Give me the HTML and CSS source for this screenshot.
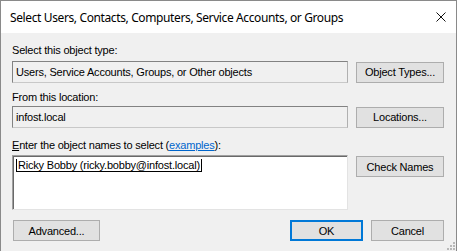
FILE: index.html
```html
<!DOCTYPE html>
<html>
<head>
<meta charset="utf-8">
<link rel="stylesheet" href="styles.css">
</head>
<body>
<div class="window">
  <div class="titlebar">
    <span class="title">Select Users, Contacts, Computers, Service Accounts, or Groups</span>
    <svg class="close" width="10" height="10" viewBox="0 0 10 10"><path d="M0.5 0.5 L9.5 9.5 M9.5 0.5 L0.5 9.5" stroke="#111" stroke-width="1" fill="none"/></svg>
  </div>
  <div class="content">
    <div class="label l1">Select this object type:</div>
    <div class="row">
      <div class="field">Users, Service Accounts, Groups, or Other objects</div>
      <div class="btn">Object Types...</div>
    </div>
    <div class="label l2">From this location:</div>
    <div class="row">
      <div class="field">infost.local</div>
      <div class="btn">Locations...</div>
    </div>
    <div class="label l3"><u>E</u>nter the object names to select (<a class="link">examples</a>):</div>
    <div class="row top">
      <div class="area"><span class="name">Ricky Bobby (ricky.bobby@infost.local)</span></div>
      <div class="btn">Check Names</div>
    </div>
    <div class="bottom">
      <div class="btn adv">Advanced...</div>
      <div class="spacer"></div>
      <div class="btn ok">OK</div>
      <div class="btn">Cancel</div>
    </div>
    <svg class="grip" width="10" height="10" viewBox="0 0 10 10">
      <g fill="#b8b8b8">
        <rect x="7" y="1" width="2" height="2"/>
        <rect x="4" y="4" width="2" height="2"/><rect x="7" y="4" width="2" height="2"/>
        <rect x="1" y="7" width="2" height="2"/><rect x="4" y="7" width="2" height="2"/><rect x="7" y="7" width="2" height="2"/>
      </g>
    </svg>
  </div>
</div>
</body>
</html>
```
FILE: styles.css
```css
html, body {
  margin: 0;
  padding: 0;
  background: #ffffff;
}
.window {
  width: 457px;
  height: 251px;
  box-sizing: border-box;
  border: 1px solid #8a8a8a;
  border-bottom: none;
  display: flex;
  flex-direction: column;
  overflow: hidden;
}
.titlebar {
  height: 32px;
  flex: none;
  background: #ffffff;
  display: flex;
  align-items: center;
  padding-left: 9px;
  padding-right: 10px;
  box-sizing: border-box;
}
.title {
  font-family: "Noto Sans", "Open Sans", sans-serif;
  font-size: 12px;
  color: #000;
  flex: 1;
  letter-spacing: -0.38px;
}
.close {
  display: block;
}
.content {
  flex: 1;
  background: #f0f0f0;
  padding: 0 12px 0 11px;
  position: relative;
  font-family: "Liberation Sans", Arial, sans-serif;
  font-size: 11px;
  letter-spacing: -0.2px;
  color: #000;
}
.label {
  line-height: 13px;
  height: 13px;
}
.l1 { margin-top: 11px; margin-bottom: 4px; }
.l2 { margin-top: 8px; margin-bottom: 2px; }
.l3 { margin-top: 11px; margin-bottom: 3px; }
.link {
  color: #0066cc;
  text-decoration: underline;
}
.row {
  display: flex;
  gap: 8px;
  align-items: center;
}
.row.top {
  align-items: flex-start;
}
.field {
  width: 336px;
  height: 22px;
  box-sizing: border-box;
  border: 1px solid #828282;
  border-right-color: #b0b0b0;
  border-bottom-color: #c8c8c8;
  background: #f0f0f0;
  padding-left: 3px;
  line-height: 20px;
}
.btn {
  width: 88px;
  height: 21px;
  box-sizing: border-box;
  border: 1px solid #adadad;
  background: #e1e1e1;
  display: flex;
  align-items: center;
  justify-content: center;
}
.area {
  width: 336px;
  height: 55px;
  box-sizing: border-box;
  background: #ffffff;
  border-top: 1px solid #a0a0a0;
  border-left: 1px solid #a0a0a0;
  border-right: 1px solid #e3e3e3;
  border-bottom: 1px solid #e3e3e3;
  box-shadow: inset 1px 1px 0 #696969;
  padding: 3px 0 0 3px;
}
.name {
  display: inline-block;
  line-height: 12px;
  border-left: 1px solid #000;
  border-right: 1px solid #000;
  border-bottom: 1px solid #000;
  padding: 0 1px 0 1px;
}
.row.top .btn {
  margin-top: 1px;
}
.bottom {
  display: flex;
  gap: 8px;
  margin-top: 10px;
}
.adv {
  margin-left: 1px;
}
.spacer {
  flex: 1;
}
.ok {
  width: 73px;
  border: 2px solid #0078d7;
}
.bottom .btn {
  width: 73px;
}
.bottom .adv {
  width: 87px;
}
.grip {
  position: absolute;
  right: 0;
  bottom: 0;
}
```
